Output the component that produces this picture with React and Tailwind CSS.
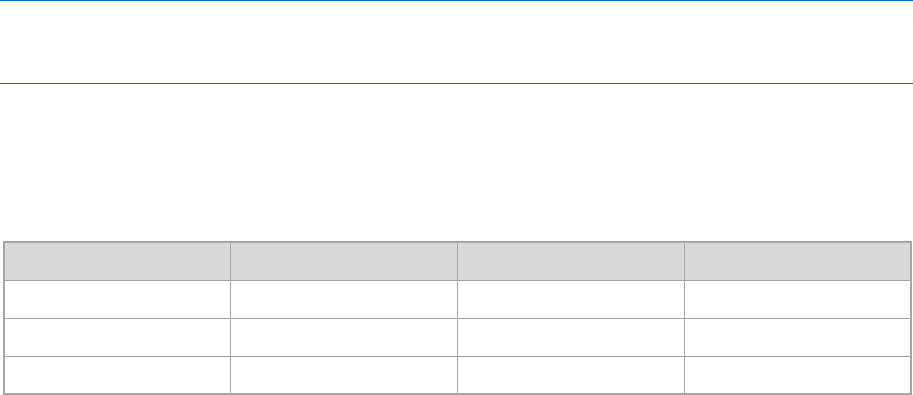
import React from "react";

const rows = [0, 1, 2];
const cols = [0, 1, 2, 3];

export default function App() {
  return (
    <div className="w-[913px] h-[395px] bg-white overflow-hidden font-['Liberation_Sans',Arial,sans-serif]">
      {/* page header band */}
      <div className="h-[84px] border-t border-b border-[#0070c0]" />

      <div className="pt-[157px] pl-[3px]">
        <table className="w-[909px] border-collapse table-fixed border-2 border-[#a6a6a6]">
          <thead>
            <tr className="h-[38px] bg-[#d9d9d9]">
              {cols.map((c) => (
                <th key={c} className="border border-[#a6a6a6] p-0" />
              ))}
            </tr>
          </thead>
          <tbody>
            {rows.map((r) => (
              <tr key={r} className="h-[38px]">
                {cols.map((c) => (
                  <td key={c} className="border border-[#a6a6a6] p-0" />
                ))}
              </tr>
            ))}
          </tbody>
        </table>
      </div>
    </div>
  );
}
